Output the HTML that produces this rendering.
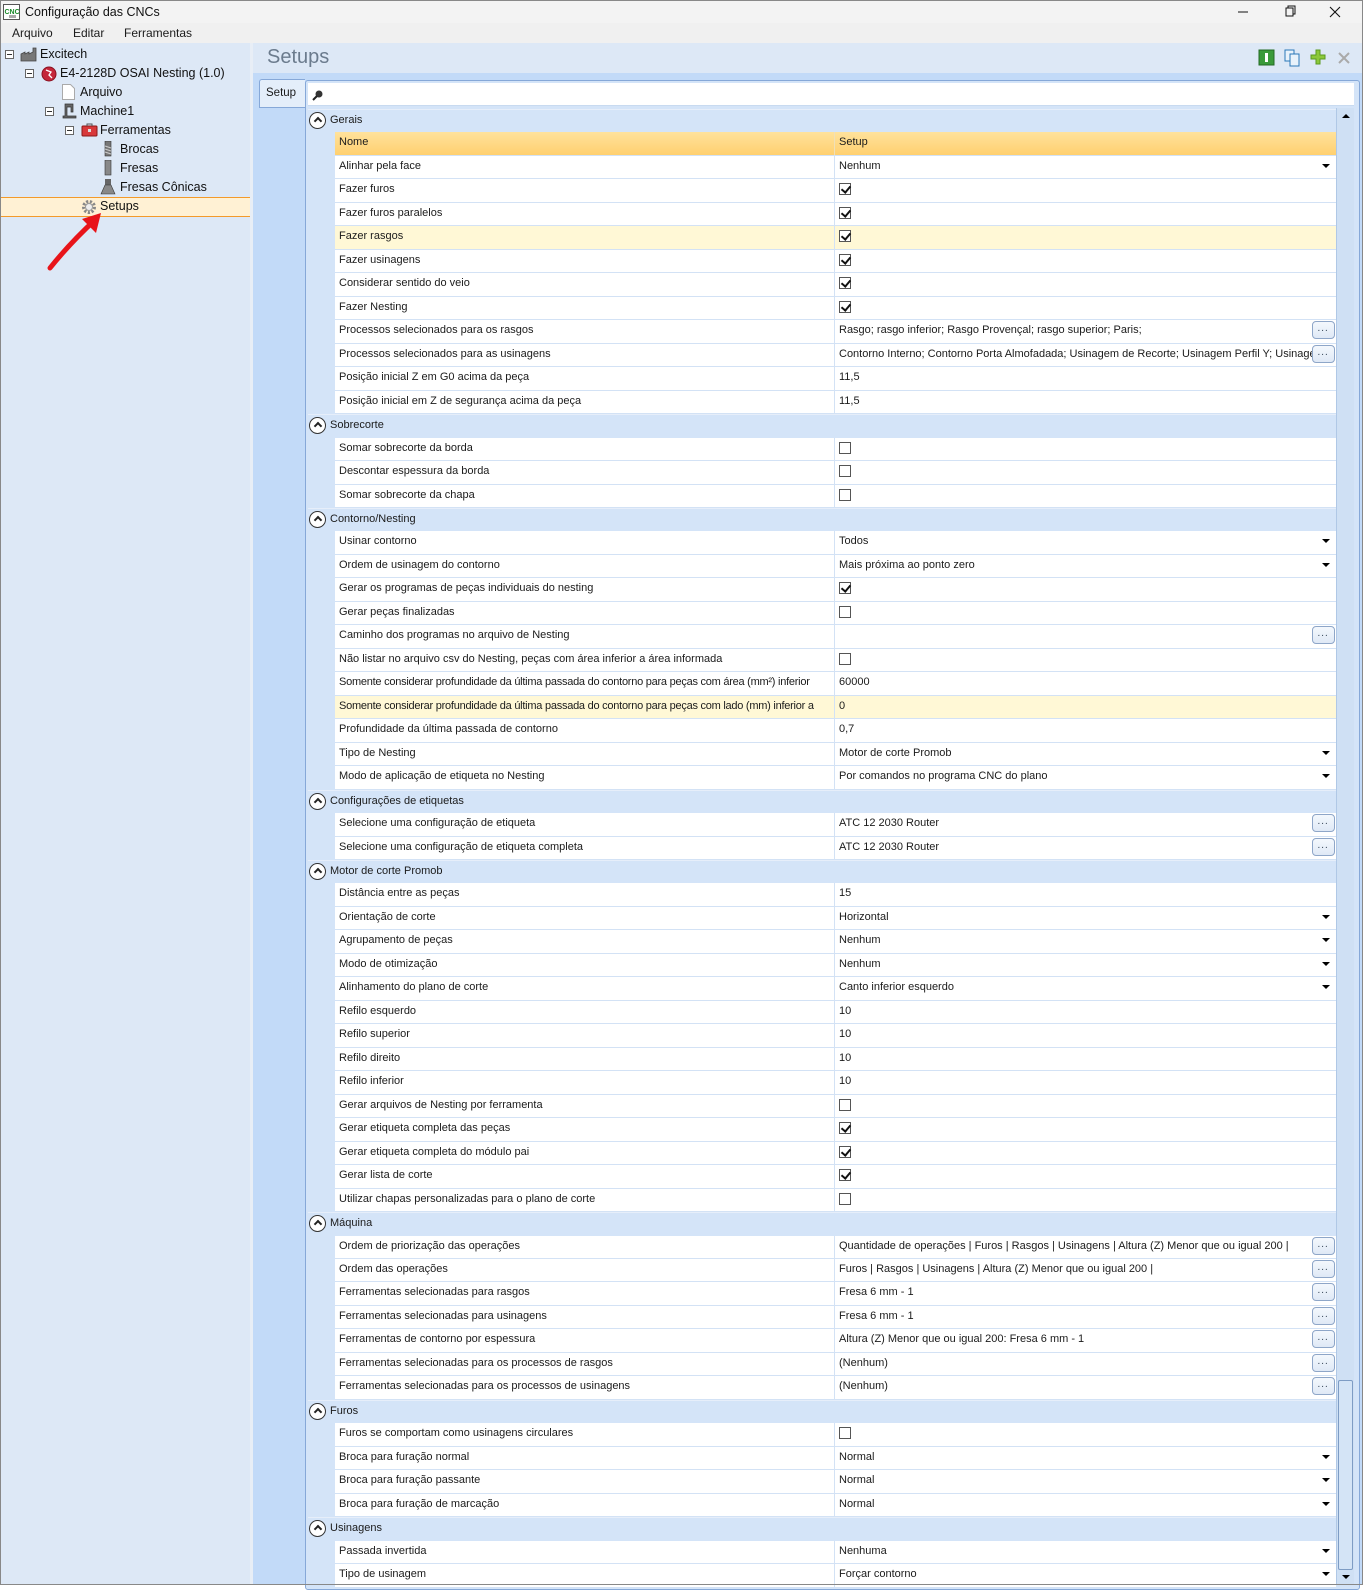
<!DOCTYPE html>
<html><head><meta charset="utf-8">
<style>
*{margin:0;padding:0;box-sizing:border-box}
body{width:1366px;height:1585px;overflow:hidden;background:#fff;font-family:"Liberation Sans",Arial,sans-serif;position:relative;color:#1b1b1b}
.abs{position:absolute}
#title{left:0;top:0;width:1366px;height:23px;background:#f3f3f3;border-left:1px solid #888;border-top:1px solid #888}
#title .t{position:absolute;left:24px;top:4px;font-size:12.5px;color:#111}
#menu{left:0;top:23px;width:1366px;height:20px;background:#f0f0f0;font-size:12px;border-left:1px solid #888}
#menu span{position:absolute;top:3px}
#left{left:0;top:43px;width:250px;height:1542px;background:#dde8f6;border-left:1px solid #888}
#split{left:250px;top:43px;width:3px;height:1542px;background:#e8eef6}
#rhead{left:253px;top:43px;width:1110px;height:30px;background:#dde8f6}
#rbody{left:253px;top:73px;width:1110px;height:1512px;background:#c2daf8}
.tree{position:absolute;font-size:12.5px;color:#111;white-space:nowrap}
.box{position:absolute;width:9px;height:9px;border:1px solid #666;background:#fff}
.box:after{content:"";position:absolute;left:1px;top:3px;width:5px;height:1px;background:#333}
#grid{left:305px;top:80px;width:1055px;height:1510px;border:1px solid #86a8d8;border-radius:3px;background:#d4e4f8}
#search{left:308px;top:83px;width:1046px;height:23px;background:#fff;border-bottom:1px solid #c8daf0}
#rows{position:absolute;left:308px;top:109px;width:1028px}
.g{height:23.47px;background:#d4e4f8;font-size:11px;line-height:21px;padding-left:22px;position:relative;border-top:1px solid #e6eefa}
.g .c{position:absolute;left:1px;top:2px;width:17px;height:17px;border:1.3px solid #333;border-radius:50%;background:#fff}
.g .c:after{content:"";position:absolute;left:4.5px;top:5px;width:4px;height:4px;border-left:2px solid #222;border-top:2px solid #222;transform:rotate(45deg)}
.r{height:23.47px;margin-left:27px;display:flex;font-size:11px;line-height:21px;background:#fff;border-bottom:1px solid #d3e2f5}
.r.y{background:#fff8d6}
.r .n{width:500px;padding-left:4px;border-right:1px solid #d3e2f5;overflow:hidden;white-space:nowrap}
.r .v{flex:1;padding-left:4px;position:relative;overflow:hidden;white-space:nowrap}
.h{height:23.47px;margin-left:27px;display:flex;font-size:11px;line-height:21px;background:linear-gradient(#ffe29c,#ffd06f);border-bottom:1px solid #d3e2f5}
.h .n{width:500px;padding-left:4px;border-right:1px solid #f0e0b8}
.h .v{flex:1;padding-left:4px}
.dd{position:absolute;right:6px;top:8px;width:0;height:0;border-left:4px solid transparent;border-right:4px solid transparent;border-top:4px solid #000}
.cb{position:absolute;left:4px;top:4px;width:12px;height:12px;border:1px solid #555;background:#fff}
.cb.k:after{content:"";position:absolute;left:3px;top:0px;width:4px;height:7px;border-right:2px solid #111;border-bottom:2px solid #111;transform:rotate(40deg)}
.el{position:absolute;right:1px;top:1px;width:23px;height:18px;border:1px solid #8ea6c8;border-radius:4px;background:linear-gradient(#f4f8fd,#dfe9f6);font-size:10px;line-height:14px;text-align:center;letter-spacing:1px;color:#345}
.v.e{padding-right:28px}
#sb{left:1336px;top:108px;width:18px;height:1476px;background:#cfe0f4;border-left:1px solid #b0c8e6}
</style></head><body>
<div id="title" class="abs">
 <svg class="abs" style="left:2px;top:3px" width="17" height="16"><rect x="0.5" y="0.5" width="16" height="15" fill="#fff" stroke="#555"/><text x="1.5" y="10" font-size="7" font-weight="bold" fill="#1a8a2a" font-family="Liberation Sans">CNC</text><rect x="6" y="11" width="7" height="3" fill="#aaa"/></svg>
 <span class="t">Configuração das CNCs</span>
 <svg class="abs" style="left:1237px;top:4px" width="120" height="14"><line x1="0" y1="7" x2="10" y2="7" stroke="#111"/><rect x="48" y="3" width="7" height="8" fill="none" stroke="#111"/><path d="M50 3V1h7v8h-2" fill="none" stroke="#111"/><path d="M92 2l10 10M102 2l-10 10" stroke="#111" stroke-width="1.1"/></svg>
</div>
<div id="menu" class="abs"><span style="left:11px">Arquivo</span><span style="left:72px">Editar</span><span style="left:123px">Ferramentas</span></div>
<div id="left" class="abs"></div>
<div id="split" class="abs"></div>
<div class="box" style="left:5px;top:50px"></div>
<svg class="abs" style="left:20px;top:47px" width="18" height="15"><path d="M1 14V7l4-2v2l4-2v2l4-2V1h3v13z" fill="#777" stroke="#444" stroke-width=".8"/></svg>
<div class="tree" style="left:40px;top:47px">Excitech</div>
<div class="box" style="left:25px;top:69px"></div>
<svg class="abs" style="left:41px;top:66px" width="16" height="16"><circle cx="8" cy="8" r="7" fill="#c4263a" stroke="#8a1020"/><path d="M5 4l5 2-2 3 3 3" stroke="#fff" fill="none" stroke-width="1.3"/></svg>
<div class="tree" style="left:60px;top:66px">E4-2128D OSAI Nesting (1.0)</div>
<svg class="abs" style="left:62px;top:84px" width="13" height="16"><path d="M.5 .5h8l4 4v11H.5z" fill="#fff" stroke="#aaa"/></svg>
<div class="tree" style="left:80px;top:85px">Arquivo</div>
<div class="box" style="left:45px;top:107px"></div>
<svg class="abs" style="left:62px;top:103px" width="15" height="16"><path d="M3 1h8v8h-2v-5h-4v9h9v2H1v-2h2z" fill="#666" stroke="#333" stroke-width=".7"/></svg>
<div class="tree" style="left:80px;top:104px">Machine1</div>
<div class="box" style="left:65px;top:126px"></div>
<svg class="abs" style="left:81px;top:122px" width="17" height="15"><rect x="1" y="4" width="15" height="10" rx="1" fill="#d8383a" stroke="#8a1818"/><path d="M6 4V2h5v2" fill="none" stroke="#555"/><rect x="7" y="7" width="3" height="3" fill="#ddd"/></svg>
<div class="tree" style="left:100px;top:123px">Ferramentas</div>
<svg class="abs" style="left:104px;top:141px" width="8" height="16"><rect x="1" y="0" width="6" height="15" fill="#777" stroke="#333" stroke-width=".6"/><path d="M1 5l6 2M1 8l6 2M1 11l6 2" stroke="#ccc"/></svg>
<div class="tree" style="left:120px;top:142px">Brocas</div>
<svg class="abs" style="left:104px;top:160px" width="8" height="16"><rect x="1" y="0" width="6" height="15" fill="#888" stroke="#333" stroke-width=".6"/></svg>
<div class="tree" style="left:120px;top:161px">Fresas</div>
<svg class="abs" style="left:100px;top:179px" width="16" height="16"><rect x="5" y="0" width="6" height="6" fill="#666"/><path d="M5 6h6l4 9H1z" fill="#888" stroke="#333" stroke-width=".6"/></svg>
<div class="tree" style="left:120px;top:180px">Fresas Cônicas</div>
<div class="abs" style="left:1px;top:197px;width:249px;height:20px;background:#fff1d4;border-top:1px solid #f39a2a;border-bottom:1px solid #f39a2a"></div>
<svg class="abs" style="left:81px;top:199px" width="16" height="16"><circle cx="8" cy="8" r="5.5" fill="none" stroke="#888" stroke-width="3" stroke-dasharray="2.2 1.6"/><circle cx="8" cy="8" r="3.5" fill="#eee" stroke="#999"/></svg>
<div class="tree" style="left:100px;top:199px">Setups</div>
<svg class="abs" style="left:40px;top:205px" width="70" height="75"><path d="M10 63Q30 38 56 14" stroke="#e8141a" stroke-width="5" stroke-linecap="round" fill="none"/><path d="M61 8L42 14L56 28z" fill="#e8141a"/></svg>
<div id="rhead" class="abs"><span class="abs" style="left:14px;top:3px;font-size:20px;color:#6b7b8d">Setups</span></div>
<svg class="abs" style="left:1258px;top:49px" width="100" height="18"><rect x="1" y="1" width="15" height="15" fill="#3a9a3a" stroke="#246a24"/><rect x="7" y="4" width="3" height="9" fill="#fff"/><rect x="27" y="1" width="9" height="11" fill="#e8f2fb" stroke="#2a78b8"/><rect x="32" y="5" width="9" height="12" fill="#e8f2fb" stroke="#2a78b8"/><path d="M58 1h4v5h5v4h-5v5h-4v-5h-5v-4h5z" fill="#8cc83a" stroke="#5a9a20"/><path d="M81 4l10 10M91 4l-10 10" stroke="#aaa" stroke-width="2"/></svg>
<div id="rbody" class="abs"></div>
<div class="abs" style="left:259px;top:79px;width:46px;height:29px;background:#e4eefa;border:1px solid #86a8d8;border-right:none;border-radius:3px 0 0 0;font-size:11.5px;line-height:26px;padding-left:6px">Setup</div>
<div id="grid" class="abs"></div>
<div id="search" class="abs"><svg class="abs" style="left:4px;top:6px" width="12" height="12"><circle cx="7" cy="5" r="3.5" fill="#333"/><path d="M5 7L1 11" stroke="#222" stroke-width="2"/></svg></div>
<div id="sb" class="abs"><div class="abs" style="left:5px;top:6px;border-left:4px solid transparent;border-right:4px solid transparent;border-bottom:4px solid #000"></div>
<div class="abs" style="left:1px;top:1272px;width:15px;height:190px;border:1px solid #7e9cc4;border-radius:2px;background:#d4e4f6"></div>
<div class="abs" style="left:5px;top:1467px;border-left:4px solid transparent;border-right:4px solid transparent;border-top:4px solid #000"></div></div>
<div id="rows">
<div class="g"><span class="c"></span>Gerais</div>
<div class="h"><div class="n">Nome</div><div class="v">Setup</div></div>
<div class="r"><div class="n">Alinhar pela face</div><div class="v">Nenhum<i class="dd"></i></div></div>
<div class="r"><div class="n">Fazer furos</div><div class="v"><i class="cb k"></i></div></div>
<div class="r"><div class="n">Fazer furos paralelos</div><div class="v"><i class="cb k"></i></div></div>
<div class="r y"><div class="n">Fazer rasgos</div><div class="v"><i class="cb k"></i></div></div>
<div class="r"><div class="n">Fazer usinagens</div><div class="v"><i class="cb k"></i></div></div>
<div class="r"><div class="n">Considerar sentido do veio</div><div class="v"><i class="cb k"></i></div></div>
<div class="r"><div class="n">Fazer Nesting</div><div class="v"><i class="cb k"></i></div></div>
<div class="r"><div class="n">Processos selecionados para os rasgos</div><div class="v e">Rasgo; rasgo inferior; Rasgo Provençal; rasgo superior; Paris;<i class="el">...</i></div></div>
<div class="r"><div class="n">Processos selecionados para as usinagens</div><div class="v e">Contorno Interno; Contorno Porta Almofadada; Usinagem de Recorte; Usinagem Perfil Y; Usinagem<i class="el">...</i></div></div>
<div class="r"><div class="n">Posição inicial Z em G0 acima da peça</div><div class="v">11,5</div></div>
<div class="r"><div class="n">Posição inicial em Z de segurança acima da peça</div><div class="v">11,5</div></div>
<div class="g"><span class="c"></span>Sobrecorte</div>
<div class="r"><div class="n">Somar sobrecorte da borda</div><div class="v"><i class="cb"></i></div></div>
<div class="r"><div class="n">Descontar espessura da borda</div><div class="v"><i class="cb"></i></div></div>
<div class="r"><div class="n">Somar sobrecorte da chapa</div><div class="v"><i class="cb"></i></div></div>
<div class="g"><span class="c"></span>Contorno/Nesting</div>
<div class="r"><div class="n">Usinar contorno</div><div class="v">Todos<i class="dd"></i></div></div>
<div class="r"><div class="n">Ordem de usinagem do contorno</div><div class="v">Mais próxima ao ponto zero<i class="dd"></i></div></div>
<div class="r"><div class="n">Gerar os programas de peças individuais do nesting</div><div class="v"><i class="cb k"></i></div></div>
<div class="r"><div class="n">Gerar peças finalizadas</div><div class="v"><i class="cb"></i></div></div>
<div class="r"><div class="n">Caminho dos programas no arquivo de Nesting</div><div class="v e"><i class="el">...</i></div></div>
<div class="r"><div class="n">Não listar no arquivo csv do Nesting, peças com área inferior a área informada</div><div class="v"><i class="cb"></i></div></div>
<div class="r"><div class="n" style="letter-spacing:-0.25px">Somente considerar profundidade da última passada do contorno para peças com área (mm²) inferior</div><div class="v">60000</div></div>
<div class="r y"><div class="n" style="letter-spacing:-0.25px">Somente considerar profundidade da última passada do contorno para peças com lado (mm) inferior a</div><div class="v">0</div></div>
<div class="r"><div class="n">Profundidade da última passada de contorno</div><div class="v">0,7</div></div>
<div class="r"><div class="n">Tipo de Nesting</div><div class="v">Motor de corte Promob<i class="dd"></i></div></div>
<div class="r"><div class="n">Modo de aplicação de etiqueta no Nesting</div><div class="v">Por comandos no programa CNC do plano<i class="dd"></i></div></div>
<div class="g"><span class="c"></span>Configurações de etiquetas</div>
<div class="r"><div class="n">Selecione uma configuração de etiqueta</div><div class="v e">ATC 12 2030 Router<i class="el">...</i></div></div>
<div class="r"><div class="n">Selecione uma configuração de etiqueta completa</div><div class="v e">ATC 12 2030 Router<i class="el">...</i></div></div>
<div class="g"><span class="c"></span>Motor de corte Promob</div>
<div class="r"><div class="n">Distância entre as peças</div><div class="v">15</div></div>
<div class="r"><div class="n">Orientação de corte</div><div class="v">Horizontal<i class="dd"></i></div></div>
<div class="r"><div class="n">Agrupamento de peças</div><div class="v">Nenhum<i class="dd"></i></div></div>
<div class="r"><div class="n">Modo de otimização</div><div class="v">Nenhum<i class="dd"></i></div></div>
<div class="r"><div class="n">Alinhamento do plano de corte</div><div class="v">Canto inferior esquerdo<i class="dd"></i></div></div>
<div class="r"><div class="n">Refilo esquerdo</div><div class="v">10</div></div>
<div class="r"><div class="n">Refilo superior</div><div class="v">10</div></div>
<div class="r"><div class="n">Refilo direito</div><div class="v">10</div></div>
<div class="r"><div class="n">Refilo inferior</div><div class="v">10</div></div>
<div class="r"><div class="n">Gerar arquivos de Nesting por ferramenta</div><div class="v"><i class="cb"></i></div></div>
<div class="r"><div class="n">Gerar etiqueta completa das peças</div><div class="v"><i class="cb k"></i></div></div>
<div class="r"><div class="n">Gerar etiqueta completa do módulo pai</div><div class="v"><i class="cb k"></i></div></div>
<div class="r"><div class="n">Gerar lista de corte</div><div class="v"><i class="cb k"></i></div></div>
<div class="r"><div class="n">Utilizar chapas personalizadas para o plano de corte</div><div class="v"><i class="cb"></i></div></div>
<div class="g"><span class="c"></span>Máquina</div>
<div class="r"><div class="n">Ordem de priorização das operações</div><div class="v e">Quantidade de operações | Furos | Rasgos | Usinagens | Altura (Z) Menor que ou igual 200 |<i class="el">...</i></div></div>
<div class="r"><div class="n">Ordem das operações</div><div class="v e">Furos | Rasgos | Usinagens | Altura (Z) Menor que ou igual 200 |<i class="el">...</i></div></div>
<div class="r"><div class="n">Ferramentas selecionadas para rasgos</div><div class="v e">Fresa 6 mm - 1<i class="el">...</i></div></div>
<div class="r"><div class="n">Ferramentas selecionadas para usinagens</div><div class="v e">Fresa 6 mm - 1<i class="el">...</i></div></div>
<div class="r"><div class="n">Ferramentas de contorno por espessura</div><div class="v e">Altura (Z) Menor que ou igual 200: Fresa 6 mm - 1<i class="el">...</i></div></div>
<div class="r"><div class="n">Ferramentas selecionadas para os processos de rasgos</div><div class="v e">(Nenhum)<i class="el">...</i></div></div>
<div class="r"><div class="n">Ferramentas selecionadas para os processos de usinagens</div><div class="v e">(Nenhum)<i class="el">...</i></div></div>
<div class="g"><span class="c"></span>Furos</div>
<div class="r"><div class="n">Furos se comportam como usinagens circulares</div><div class="v"><i class="cb"></i></div></div>
<div class="r"><div class="n">Broca para furação normal</div><div class="v">Normal<i class="dd"></i></div></div>
<div class="r"><div class="n">Broca para furação passante</div><div class="v">Normal<i class="dd"></i></div></div>
<div class="r"><div class="n">Broca para furação de marcação</div><div class="v">Normal<i class="dd"></i></div></div>
<div class="g"><span class="c"></span>Usinagens</div>
<div class="r"><div class="n">Passada invertida</div><div class="v">Nenhuma<i class="dd"></i></div></div>
<div class="r"><div class="n">Tipo de usinagem</div><div class="v">Forçar contorno<i class="dd"></i></div></div>
</div>
<div class="abs" style="left:0;top:1584px;width:1366px;height:1px;background:#888"></div>
<div class="abs" style="left:1362px;top:0;width:4px;height:1585px;background:#fff;border-left:1px solid #888"></div>
</body></html>
